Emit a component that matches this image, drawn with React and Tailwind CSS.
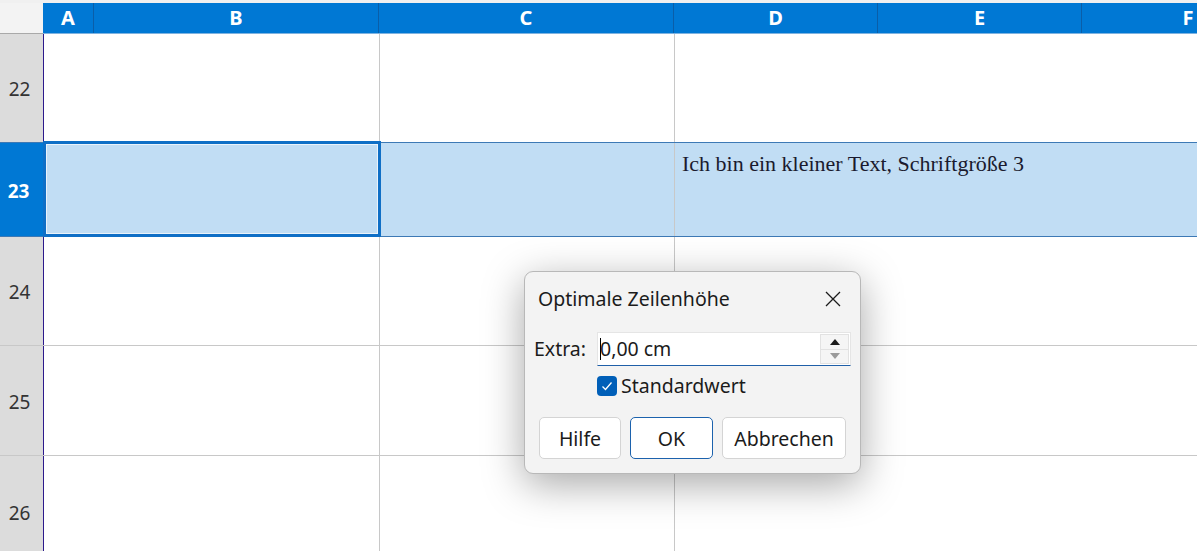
import React from "react";

const ui = { fontFamily: '"Noto Sans", "Open Sans", sans-serif' };

function ColHead({ w, label, last }) {
  return (
    <div
      className={`h-full flex items-center justify-center text-white font-bold text-[20px] shrink-0 ${last ? "" : "border-r border-[#0a5ea8]"}`}
      style={{ width: w }}
    >
      {label}
    </div>
  );
}

function Row({ h, num, selected, children, borderCls }) {
  return (
    <div className={`relative flex shrink-0 ${borderCls}`} style={{ height: h }}>
      <div
        className={`w-[43px] shrink-0 flex items-center justify-center text-[19px] pt-[3px] ${
          selected ? "bg-[#0078d4] text-white font-bold pr-[6px]" : "bg-[#dcdcdc] text-[#333] pr-[4px]"
        }`}
      >
        {num}
      </div>
      <div className={`flex flex-1 border-l ${selected ? "border-[#0a6cc4] bg-[#c1ddf4]" : "border-[#2c1a8c] bg-white"}`}>
        <div className="w-[336px] shrink-0 border-r border-[#c8c8c8]" />
        <div className="w-[295px] shrink-0 border-r border-[#c8c8c8]" />
        <div className="flex-1 relative">{children}</div>
      </div>
      {selected && (
        <div className="absolute left-[43px] top-[-2px] w-[338px] h-[96px] border-[3px] border-[#0f6fc6] shadow-[inset_0_0_0_1px_#eaf3fb] pointer-events-none" />
      )}
    </div>
  );
}

export default function App() {
  return (
    <div className="w-[1197px] h-[551px] overflow-hidden relative bg-white" style={ui}>
      <div className="flex flex-col h-full">
        <div className="h-[3px] bg-[#f0f0f0] shrink-0" />
        <div className="flex h-[30px] shrink-0">
          <div className="w-[43px] bg-[#f3f3f3] shrink-0" />
          <div className="flex flex-1 bg-[#0078d4] overflow-hidden">
            <ColHead w={51} label="A" />
            <ColHead w={285} label="B" />
            <ColHead w={295} label="C" />
            <ColHead w={204} label="D" />
            <ColHead w={204} label="E" />
            <ColHead w={212} label="F" last />
          </div>
        </div>
        <div className="flex h-px shrink-0">
          <div className="w-[43px] bg-[#a9a9a9]" />
          <div className="flex-1 bg-[#7fb3e0]" />
        </div>
        <Row h={109} num="22" borderCls="border-b border-[#3d79b5]" />
        <Row h={94} num="23" selected borderCls="border-b border-[#3d79b5]">
          <div
            className="absolute left-[7px] top-[4px] text-[22px] text-[#1a1a2e] whitespace-nowrap"
            style={{ fontFamily: '"Liberation Serif", "Times New Roman", serif' }}
          >
            Ich bin ein kleiner Text, Schriftgröße 3
          </div>
        </Row>
        <Row h={109} num="24" borderCls="border-b border-[#c8c8c8]" />
        <Row h={110} num="25" borderCls="border-b border-[#c8c8c8]" />
        <Row h={112} num="26" borderCls="" />
      </div>

      {/* Dialog */}
      <div className="absolute left-[524px] top-[271px] w-[337px] h-[203px] rounded-[9px] border border-[#b8b8b8] bg-[#f3f3f3] shadow-[0_10px_40px_rgba(0,0,0,0.35)] flex flex-col">
        <div className="h-[54px] flex items-center justify-between pl-[13px] pr-[19px]">
          <span className="text-[19.5px] text-[#1b1b1b]">Optimale Zeilenhöhe</span>
          <svg width="16" height="16" viewBox="0 0 16 16" fill="none" stroke="#1b1b1b" strokeWidth="1.3">
            <path d="M1 1 L15 15 M15 1 L1 15" />
          </svg>
        </div>
        <div className="flex items-center pl-[9px] mt-[6px]">
          <span className="text-[19.5px] text-[#1b1b1b] w-[63px]">Extra:</span>
          <div className="w-[254px] h-[34px] bg-white border border-[#e5e5e5] border-b-[#1f5fa8] flex items-center relative">
            <div className="w-px h-[22px] bg-black ml-[2px]" />
            <span className="text-[19.5px] text-[#1b1b1b] ml-[-1px]">0,00 cm</span>
            <div className="absolute right-[1px] top-[1px] w-[29px] h-[30px] flex flex-col border border-[#e2e2e2] bg-[#f5f5f5]">
              <div className="flex-1 flex items-center justify-center border-b border-[#e2e2e2]">
                <svg width="10" height="6" viewBox="0 0 10 6"><path d="M0 6 L5 0 L10 6 Z" fill="#1b1b1b" /></svg>
              </div>
              <div className="flex-1 flex items-center justify-center">
                <svg width="10" height="6" viewBox="0 0 10 6"><path d="M0 0 L5 6 L10 0 Z" fill="#9a9a9a" /></svg>
              </div>
            </div>
          </div>
        </div>
        <div className="flex items-center pl-[72px] mt-[5px]">
          <div className="w-[20px] h-[20px] rounded-[4px] bg-[#005fb8] flex items-center justify-center">
            <svg width="12" height="10" viewBox="0 0 12 10" fill="none" stroke="white" strokeWidth="1.3">
              <path d="M1.5 5.5 L4.5 8.5 L10.5 1.5" />
            </svg>
          </div>
          <span className="text-[19.5px] text-[#1b1b1b] ml-[4px]">Standardwert</span>
        </div>
        <div className="flex pl-[14px] mt-[17px] gap-[9px]">
          <div className="w-[82px] h-[42px] rounded-[5px] bg-white border border-[#d4d4d4] flex items-center justify-center text-[19.5px] text-[#1b1b1b]">Hilfe</div>
          <div className="w-[83px] h-[42px] rounded-[5px] bg-white border border-[#1c62ad] flex items-center justify-center text-[19.5px] text-[#1b1b1b]">OK</div>
          <div className="w-[124px] h-[42px] rounded-[5px] bg-white border border-[#d4d4d4] flex items-center justify-center text-[19.5px] text-[#1b1b1b]">Abbrechen</div>
        </div>
      </div>
    </div>
  );
}
